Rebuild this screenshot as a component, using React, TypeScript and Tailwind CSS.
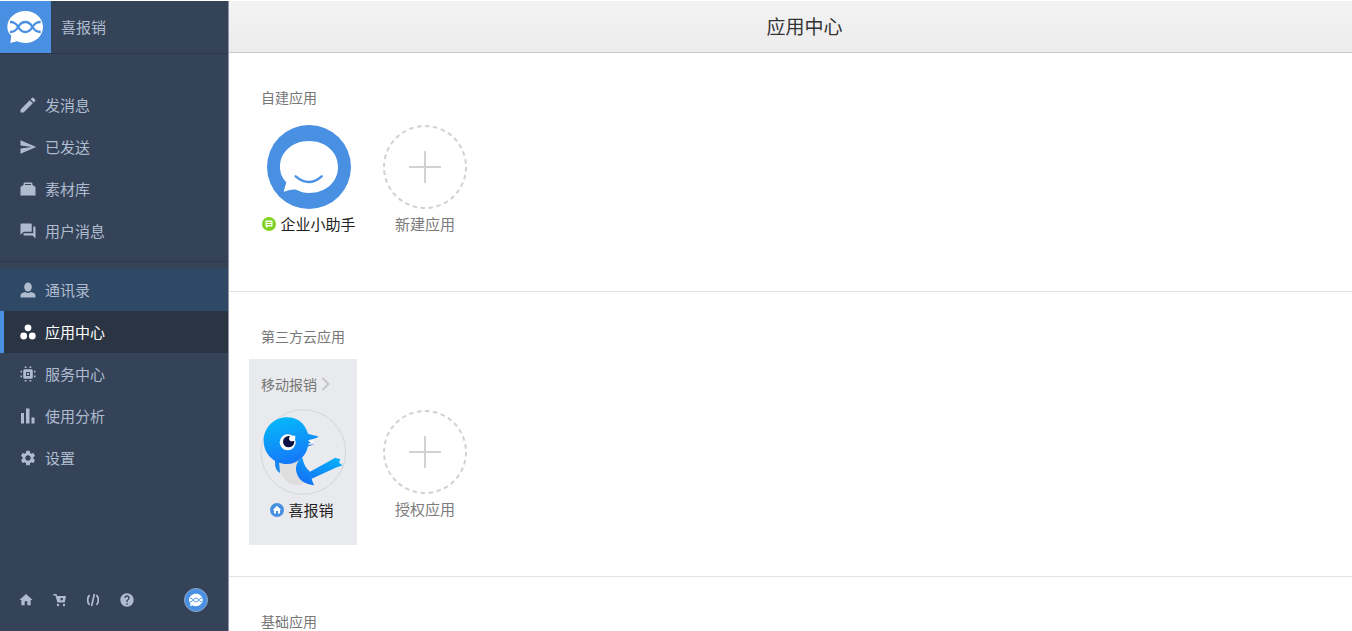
import type { ReactNode } from 'react'
import { MdEdit, MdSend, MdQuestionAnswer, MdSettings, MdHome, MdHelp } from 'react-icons/md'

type NavItem = {
  label: string
  icon: ReactNode
  state?: 'hover' | 'active'
}

function CaseIcon() {
  return (
    <svg viewBox="0 0 16 16" className="size-4" fill="currentColor">
      <path d="M3.500 4V2.500l1-1h7l1 1V4l3 2v8.500H.5V6l3-2Zm1.500 0h6V3H5v1Z" fillRule="evenodd" />
    </svg>
  )
}

function PersonIcon() {
  return (
    <svg viewBox="0 0 16 16" className="size-4" fill="currentColor">
      <ellipse cx="8" cy="5" rx="3.800" ry="4.500" />
      <path d="M.5 15.500v-2c0-1.800 2-2.900 4.800-3.400.9.700 1.700 1 2.700 1s1.800-.3 2.700-1c2.800.5 4.800 1.600 4.800 3.400v2H.5Z" />
    </svg>
  )
}

function AppsIcon() {
  return (
    <svg viewBox="0 0 16 16" className="size-4" fill="currentColor">
      <circle cx="8" cy="3.800" r="3.400" />
      <circle cx="3.700" cy="12" r="3.400" />
      <circle cx="12.300" cy="12" r="3.400" />
    </svg>
  )
}

function ChipIcon() {
  return (
    <svg viewBox="0 0 16 16" className="size-4" fill="currentColor">
      <path
        fillRule="evenodd"
        d="M4.200 3.200h7.600l1 1v7.600l-1 1H4.200l-1-1V4.200l1-1ZM6 6v4h4V6H6Z"
      />
      <path d="M7 7h2v2H7zM4.700.5h1.800V2H4.700zM9.500.5h1.800V2H9.500zM4.700 14h1.800v1.500H4.700zM9.500 14h1.800v1.500H9.500zM.5 4.700H2v1.800H.5zM.5 9.500H2v1.800H.5zM14 4.700h1.500v1.800H14zM14 9.500h1.500v1.800H14z" />
    </svg>
  )
}

function BarsIcon() {
  return (
    <svg viewBox="0 0 16 16" className="size-4" fill="currentColor">
      <path d="M1 5h3v10.500H1zM6 .5h3.500v15H6zM11.500 9.500h3v6h-3z" />
    </svg>
  )
}

function CartIcon() {
  return (
    <svg viewBox="0 0 14 14" className="size-3.5" fill="currentColor">
      <path d="M.3 1h3l1 2H13l-1.300 6.500H4.400L2.400 2.400H.3V1Zm7.200 4v2.300h2.300V5H7.500Z" fillRule="evenodd" />
      <circle cx="5" cy="12" r="1.200" />
      <circle cx="11" cy="12" r="1.200" />
    </svg>
  )
}

function CodeIcon() {
  return (
    <svg viewBox="0 0 14 14" className="size-3.5" fill="none" stroke="currentColor" strokeWidth="1.700">
      <path d="M3.800 2.300C2 3.300 1.700 5 1.700 7s.3 3.700 2.100 4.700M10.200 2.300C12 3.300 12.300 5 12.300 7s-.3 3.700-2.100 4.700M8.400 1 5.600 13" />
    </svg>
  )
}

function Helix({ className }: { className: string }) {
  return (
    <svg viewBox="0 3 153 156" className={className}>
      <path fill="#fff" d="M76 33c30 0 53 21 53 48s-23 48-53 48c-9 0-17-1-24-5-7 1-14 3-21 5l3-22c-8-7-12-16-12-26 0-27 24-48 54-48Z" />
      <g fill="none" stroke="#4a90e2" strokeWidth="7">
        <path d="M30 66c30 0 20 30 46 30s16-30 46-30" />
        <path d="M30 96c30 0 20-30 46-30s16 30 46 30" />
      </g>
    </svg>
  )
}

function AssistantIcon() {
  return (
    <svg viewBox="84 134 252 252" className="size-[84px]">
      <circle cx="210" cy="260" r="126" fill="#4a90e2" />
      <path
        fill="#fff"
        d="M210 182c50 0 87 33 87 78s-37 78-87 78c-14 0-27-4-38-10-12-3-26 3-38 6l8-28c-12-12-19-28-19-46 0-45 37-78 87-78Z"
      />
      <path d="M170 288q40 34 78 0" fill="none" stroke="#4a90e2" strokeWidth="7" strokeLinecap="round" />
    </svg>
  )
}

function BirdIcon() {
  return (
    <svg viewBox="63 270 252 252" className="size-[84px] overflow-visible">
      <defs>
        <linearGradient id="head" x1="0.300" y1="0" x2="0.600" y2="1">
          <stop offset="0" stopColor="#05b9fb" />
          <stop offset="1" stopColor="#1674f8" />
        </linearGradient>
        <linearGradient id="tail" x1="1" y1="0" x2="0.200" y2="1">
          <stop offset="0" stopColor="#08b4fa" />
          <stop offset="1" stopColor="#1470f6" />
        </linearGradient>
      </defs>
      <circle cx="190" cy="396" r="127" fill="none" stroke="#d3d5d9" strokeWidth="3" />
      <path d="M112 420c2 34 18 62 42 73 10 4 22 5 35 0l8-20-8-60Z" fill="#dededf" />
      <path d="M106 418c-3 18 1 35 14 41l-3-35Z" fill="#1a86f0" />
      <path
        d="M187 413c-18 10-22 30-17 46 8 24 26 34 53 37-4-7-6-13-8-20l72-33 21-7-11-8 4-10-15-5-76 42c-12-10-19-23-23-42Z"
        fill="url(#tail)"
      />
      <path d="M198 362h26l-18 14Z" fill="#fff" />
      <path d="M202 374l21-1-22 7Z" fill="#1d7bf2" />
      <path d="M141 292c30 0 53 16 63 49 11 3 21 5 32 9-10 5-19 8-31 10 1 3 0 5 8 7l-8 5c-4 36-31 60-64 60-39 0-70-31-70-70s31-70 70-70Z" fill="url(#head)" />
      <circle cx="143" cy="367" r="24" fill="#fff" />
      <circle cx="146" cy="365" r="17" fill="#0b1245" />
      <path d="M152 347c-7 5-6 13 0 16 5 2 10 1 13-2l1-14Z" fill="#fff" />
    </svg>
  )
}

function AddIcon() {
  return (
    <svg viewBox="0 0 84 84" className="size-[84px]" fill="none" stroke="#d2d2d2" strokeWidth="2">
      <circle cx="42" cy="42" r="41" pathLength="256" strokeDasharray="4.500 3.500" />
      <path d="M26 42h32M42 26v32" />
    </svg>
  )
}

const messageNav: NavItem[] = [
  { label: '发消息', icon: <MdEdit className="size-5 shrink-0" /> },
  { label: '已发送', icon: <MdSend className="size-[18px]" /> },
  { label: '素材库', icon: <CaseIcon /> },
  { label: '用户消息', icon: <MdQuestionAnswer className="size-[18px]" /> },
]

const manageNav: NavItem[] = [
  { label: '通讯录', icon: <PersonIcon />, state: 'hover' },
  { label: '应用中心', icon: <AppsIcon />, state: 'active' },
  { label: '服务中心', icon: <ChipIcon /> },
  { label: '使用分析', icon: <BarsIcon /> },
  { label: '设置', icon: <MdSettings className="size-[18px]" /> },
]

const itemStyles = {
  normal: 'border-transparent text-[#afbbcf]',
  hover: 'border-[#2f4865] bg-[#2f4865] text-[#afbbcf]',
  active: 'border-[#4a90e2] bg-[#2a3442] text-white',
}

function NavList({ items }: { items: NavItem[] }) {
  return (
    <ul>
      {items.map((item) => (
        <li key={item.label}>
          <a
            href="#"
            className={`flex h-[42px] items-center gap-2 border-l-4 pl-3.5 text-[15px] ${itemStyles[item.state || 'normal']}`}
          >
            <span className="flex w-[19px] justify-center">{item.icon}</span>
            {item.label}
          </a>
        </li>
      ))}
    </ul>
  )
}

function Sidebar() {
  return (
    <aside className="flex w-[229px] shrink-0 flex-col border-r border-[#8e97a3] bg-[#344358] text-[#afbbcf]">
      <div className="flex h-[53px] items-center border-b border-[#2c394b]">
        <div className="flex h-full w-[51px] bg-[#4a90e2]">
          <Helix className="h-[52px] w-[51px]" />
        </div>
        <span className="pl-2.5 text-[15px]">喜报销</span>
      </div>
      <nav className="pt-[30px]">
        <NavList items={messageNav} />
        <div className="mt-[9px] mb-[7px] border-t border-[#2c394b]" />
        <NavList items={manageNav} />
      </nav>
      <div className="mt-auto flex items-center justify-between pr-5 pb-[19px] pl-[18px]">
        <div className="flex items-center gap-[19px]">
          <a href="#" aria-label="首页"><MdHome className="size-4" /></a>
          <a href="#" aria-label="商城"><CartIcon /></a>
          <a href="#" aria-label="开发"><CodeIcon /></a>
          <a href="#" aria-label="帮助"><MdHelp className="size-4" /></a>
        </div>
        <a href="#" aria-label="账号" className="flex size-6 items-center justify-center rounded-full border border-[#8fa6c4] bg-[#4a90e2]">
          <Helix className="size-5" />
        </a>
      </div>
    </aside>
  )
}

function AddApp({ label }: { label: string }) {
  return (
    <button className="flex w-24 flex-col items-center gap-[5px] text-[15px] leading-5 text-[#7c7c7c]">
      <AddIcon />
      {label}
    </button>
  )
}

export default function App() {
  return (
    <div className="flex h-screen overflow-hidden bg-white pt-px font-['Noto_Sans_CJK_SC',sans-serif]">
      <Sidebar />
      <main className="min-w-0 flex-1">
        <header className="flex h-[52px] items-center justify-center border-b border-[#c9c9c9] bg-linear-to-b from-[#f3f3f3] to-[#ececec] pl-7">
          <h1 className="text-[19px] text-[#333]">应用中心</h1>
        </header>

        <section className="border-b border-[#e3e3e3] pt-[34px] pb-[57px] pl-8">
          <h2 className="text-sm leading-5 text-[#777]">自建应用</h2>
          <div className="mt-[18px] flex gap-5">
            <a href="#" className="flex w-24 flex-col items-center gap-[5px] text-[15px] leading-5 text-[#222]">
              <AssistantIcon />
              <span className="flex items-center gap-1 whitespace-nowrap">
                <svg viewBox="0 0 14 14" className="size-3.5">
                  <circle cx="7" cy="7" r="7" fill="#7ed321" />
                  <path d="M3.500 3.500h7v6H6l-2 1.500V9.500h-.5Z" fill="#fff" />
                  <path d="M4.800 5.500h4.400M4.800 7.500h4.400" stroke="#7ed321" />
                </svg>
                企业小助手
              </span>
            </a>
            <AddApp label="新建应用" />
          </div>
        </section>

        <section className="border-b border-[#e3e3e3] pt-[34px] pb-[31px] pl-8">
          <h2 className="text-sm leading-5 text-[#777]">第三方云应用</h2>
          <div className="mt-[13px] -ml-3 flex gap-5">
            <div className="w-[108px] bg-[#e9eaed] pt-[15px] pb-[25px]">
              <a href="#" className="flex items-center gap-1 pl-3 text-sm leading-5 text-[#777]">
                移动报销
                <svg viewBox="0 0 9 14" className="h-3.5 w-[9px]" fill="none" stroke="#c4c4c6" strokeWidth="2">
                  <path d="M1.500 1 7.500 7l-6 6" />
                </svg>
              </a>
              <a href="#" className="mt-4 flex flex-col items-center gap-1.5 text-[15px] leading-5 text-[#222]">
                <BirdIcon />
                <span className="flex items-center gap-1 pr-0.5">
                  <svg viewBox="0 0 14 14" className="size-3.5">
                    <circle cx="7" cy="7" r="7" fill="#4a90e2" />
                    <path d="M7 2.800 11.200 7H10v3.500H8V8H6v2.500H4V7H2.800Z" fill="#fff" />
                  </svg>
                  喜报销
                </span>
              </a>
            </div>
            <div className="pt-[51px]">
              <AddApp label="授权应用" />
            </div>
          </div>
        </section>

        <section className="pt-[34px] pl-8">
          <h2 className="text-sm leading-5 text-[#777]">基础应用</h2>
        </section>
      </main>
    </div>
  )
}
